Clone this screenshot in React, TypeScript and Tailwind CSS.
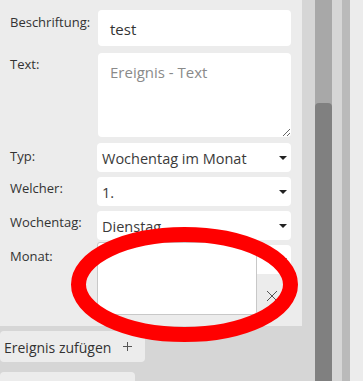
// Event editor form (Ereignis) with a red ellipse marking the Monat field.

const font = "font-['Open_Sans',_sans-serif]";

function Caret() {
  return (
    <svg width="8" height="4" viewBox="0 0 8 4" className="shrink-0">
      <path d="M0 0H8L4 4Z" fill="#222" />
    </svg>
  );
}

function Select({ value }: { value: string }) {
  return (
    <div className="flex h-[29px] items-center justify-between rounded-[4px] bg-white pl-[5px] pr-[4px] text-[14.5px] text-[#3a3a3a]">
      <span className="pt-[3px]">{value}</span>
      <Caret />
    </div>
  );
}

function Label({ children, pt }: { children: string; pt: string }) {
  return <div className={`text-[13px] leading-[18px] text-[#333] ${pt}`}>{children}</div>;
}

export default function App() {
  return (
    <div className={`flex h-[381px] w-[363px] overflow-hidden bg-[#d6d6d6] ${font}`}>
      <div className="relative w-[315px] shrink-0">
        {/* Form panel */}
        <div className="h-[326px] w-[302px] bg-[#ececec] pl-[10px] pt-[10px]">
          <div className="grid grid-cols-[87px_194px]">
            <Label pt="pt-[3px]">Beschriftung:</Label>
            <div className="ml-[1px] flex h-[36px] items-center rounded-[4px] bg-white pl-[12px] pt-[3px] text-[15px] text-[#333]">
              test
            </div>

            <Label pt="pt-[9px]">Text:</Label>
            <textarea
              placeholder="Ereignis - Text"
              className="ml-[1px] mt-[7px] h-[84px] resize rounded-[4px] bg-white px-[12px] pt-[8px] text-[15px] text-[#333] outline-none placeholder:text-[#8a8a8a]"
            />

            <Label pt="pt-[10px]">Typ:</Label>
            <div className="mt-[6px]">
              <Select value="Wochentag im Monat" />
            </div>

            <Label pt="pt-[7px]">Welcher:</Label>
            <div className="mt-[5px]">
              <Select value="1." />
            </div>

            <Label pt="pt-[7px]">Wochentag:</Label>
            <div className="mt-[5px]">
              <Select value="Dienstag" />
            </div>

            <Label pt="pt-[7px]">Monat:</Label>
            <div className="relative mt-[5px]">
              <Select value="" />
              {/* open month list */}
              <div className="absolute left-0 top-[-3px] h-[73px] w-[160px] rounded-[3px] border border-[#c8c8c8] bg-white" />
              <svg width="12" height="12" viewBox="0 0 12 12" className="absolute left-[169px] top-[45px]">
                <path d="M1 1L11 11M11 1L1 11" stroke="#555" strokeWidth="1" />
              </svg>
            </div>
          </div>
        </div>

        {/* Actions */}
        <div className="mt-[5px] flex h-[31px] w-[145px] items-center rounded-[4px] bg-[#ececec] pl-[4px] text-[14px] text-[#333]">
          <span className="pt-[2px]">Ereignis zufügen</span>
          <svg width="9" height="9" viewBox="0 0 9 9" className="ml-[12px]">
            <path d="M4.5 0V9M0 4.5H9" stroke="#555" strokeWidth="1" />
          </svg>
        </div>
        <div className="mt-[10px] h-[20px] w-[135px] rounded-t-[4px] bg-[#ececec]" />

        {/* Annotation */}
        <svg width="315" height="381" className="pointer-events-none absolute left-0 top-0">
          <ellipse cx="184.5" cy="284.5" rx="106" ry="50" fill="none" stroke="#ff0000" strokeWidth="15" />
        </svg>
      </div>

      {/* Scrollbar */}
      <div className="flex w-[17px] shrink-0 flex-col bg-[#a8a8a8]">
        <div className="mt-[103px] flex-1 rounded-t-[4px] bg-[#808080]" />
      </div>
      <div className="w-[10px] shrink-0" />
      <div className="w-[8px] shrink-0 bg-[#bababa]" />
      <div className="flex-1 bg-[#ececec]" />
    </div>
  );
}
